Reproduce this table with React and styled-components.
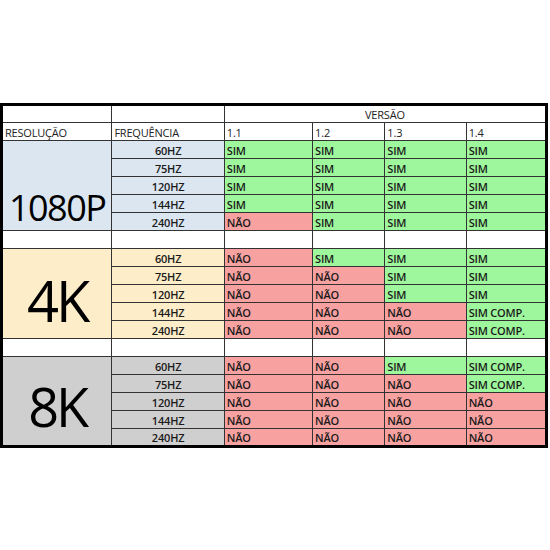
import React from "react";
import styled, { createGlobalStyle } from "styled-components";

const GlobalStyle = createGlobalStyle`
  html, body {
    margin: 0;
    padding: 0;
    background: #fff;
  }
`;

const Page = styled.div`
  width: 550px;
  height: 550px;
  display: flex;
  align-items: center;
  font-family: "Open Sans", "Liberation Sans", sans-serif;
  color: #1a1a1a;
`;

const Table = styled.table`
  border-collapse: collapse;
  table-layout: fixed;
  width: 548px;
  border: 3px solid #000;
  font-size: 11px;
`;

const Row = styled.tr`
  height: 18px;
`;

const bg = {
  blue: "#dce6f1",
  yellow: "#fdedc9",
  gray: "#d0cfcf",
  sim: "#9ef79c",
  nao: "#f7a1a0",
  white: "#fff",
};

const Cell = styled.td`
  border: 1px solid #333;
  padding: 0 2px;
  line-height: 14px;
  font-weight: 600;
  letter-spacing: -0.2px;
  vertical-align: bottom;
  white-space: nowrap;
  overflow: hidden;
  text-align: ${(p) => (p.$center ? "center" : "left")};
  background: ${(p) => bg[p.$bg || "white"]};
`;

const HeadCell = styled(Cell)`
  font-weight: 400;
  color: #222;
`;

const BigCell = styled.td`
  border: 1px solid #333;
  padding: 0 0 ${(p) => p.$pb}px;
  vertical-align: bottom;
  text-align: center;
  white-space: nowrap;
  font-size: ${(p) => p.$size}px;
  line-height: 1;
  letter-spacing: ${(p) => p.$ls}px;
  color: #000;
  background: ${(p) => bg[p.$bg]};
`;

const freqs = ["60HZ", "75HZ", "120HZ", "144HZ", "240HZ"];

const groups = [
  {
    label: "1080P",
    bg: "blue",
    size: 36,
    pb: 4,
    ls: -1.5,
    rows: [
      ["SIM", "SIM", "SIM", "SIM"],
      ["SIM", "SIM", "SIM", "SIM"],
      ["SIM", "SIM", "SIM", "SIM"],
      ["SIM", "SIM", "SIM", "SIM"],
      ["NÃO", "SIM", "SIM", "SIM"],
    ],
  },
  {
    label: "4K",
    bg: "yellow",
    size: 56,
    pb: 10,
    ls: -3,
    rows: [
      ["NÃO", "SIM", "SIM", "SIM"],
      ["NÃO", "NÃO", "SIM", "SIM"],
      ["NÃO", "NÃO", "SIM", "SIM"],
      ["NÃO", "NÃO", "NÃO", "SIM COMP."],
      ["NÃO", "NÃO", "NÃO", "SIM COMP."],
    ],
  },
  {
    label: "8K",
    bg: "gray",
    size: 54,
    pb: 12,
    ls: -3,
    rows: [
      ["NÃO", "NÃO", "SIM", "SIM COMP."],
      ["NÃO", "NÃO", "NÃO", "SIM COMP."],
      ["NÃO", "NÃO", "NÃO", "NÃO"],
      ["NÃO", "NÃO", "NÃO", "NÃO"],
      ["NÃO", "NÃO", "NÃO", "NÃO"],
    ],
  },
];

const BlankRow = () => (
  <Row>
    {Array.from({ length: 6 }).map((_, i) => (
      <Cell key={i} />
    ))}
  </Row>
);

const Group = ({ group }) => (
  <>
    {group.rows.map((vals, i) => (
      <Row key={i}>
        {i === 0 && (
          <BigCell
            rowSpan={5}
            $bg={group.bg}
            $size={group.size}
            $pb={group.pb}
            $ls={group.ls}
          >
            {group.label}
          </BigCell>
        )}
        <Cell $center $bg={group.bg}>
          {freqs[i]}
        </Cell>
        {vals.map((v, j) => (
          <Cell key={j} $bg={v.startsWith("SIM") ? "sim" : "nao"}>
            {v}
          </Cell>
        ))}
      </Row>
    ))}
  </>
);

export default function App() {
  return (
    <Page>
      <GlobalStyle />
      <Table>
        <colgroup>
          <col style={{ width: 110 }} />
          <col style={{ width: 112 }} />
          <col style={{ width: 88 }} />
          <col style={{ width: 72 }} />
          <col style={{ width: 81 }} />
          <col style={{ width: 80 }} />
        </colgroup>
        <tbody>
          <Row>
            <HeadCell />
            <HeadCell />
            <HeadCell colSpan={4} $center>
              VERSÃO
            </HeadCell>
          </Row>
          <Row>
            <HeadCell>RESOLUÇÃO</HeadCell>
            <HeadCell>FREQUÊNCIA</HeadCell>
            <HeadCell>1.1</HeadCell>
            <HeadCell>1.2</HeadCell>
            <HeadCell>1.3</HeadCell>
            <HeadCell>1.4</HeadCell>
          </Row>
          <Group group={groups[0]} />
          <BlankRow />
          <Group group={groups[1]} />
          <BlankRow />
          <Group group={groups[2]} />
        </tbody>
      </Table>
    </Page>
  );
}
